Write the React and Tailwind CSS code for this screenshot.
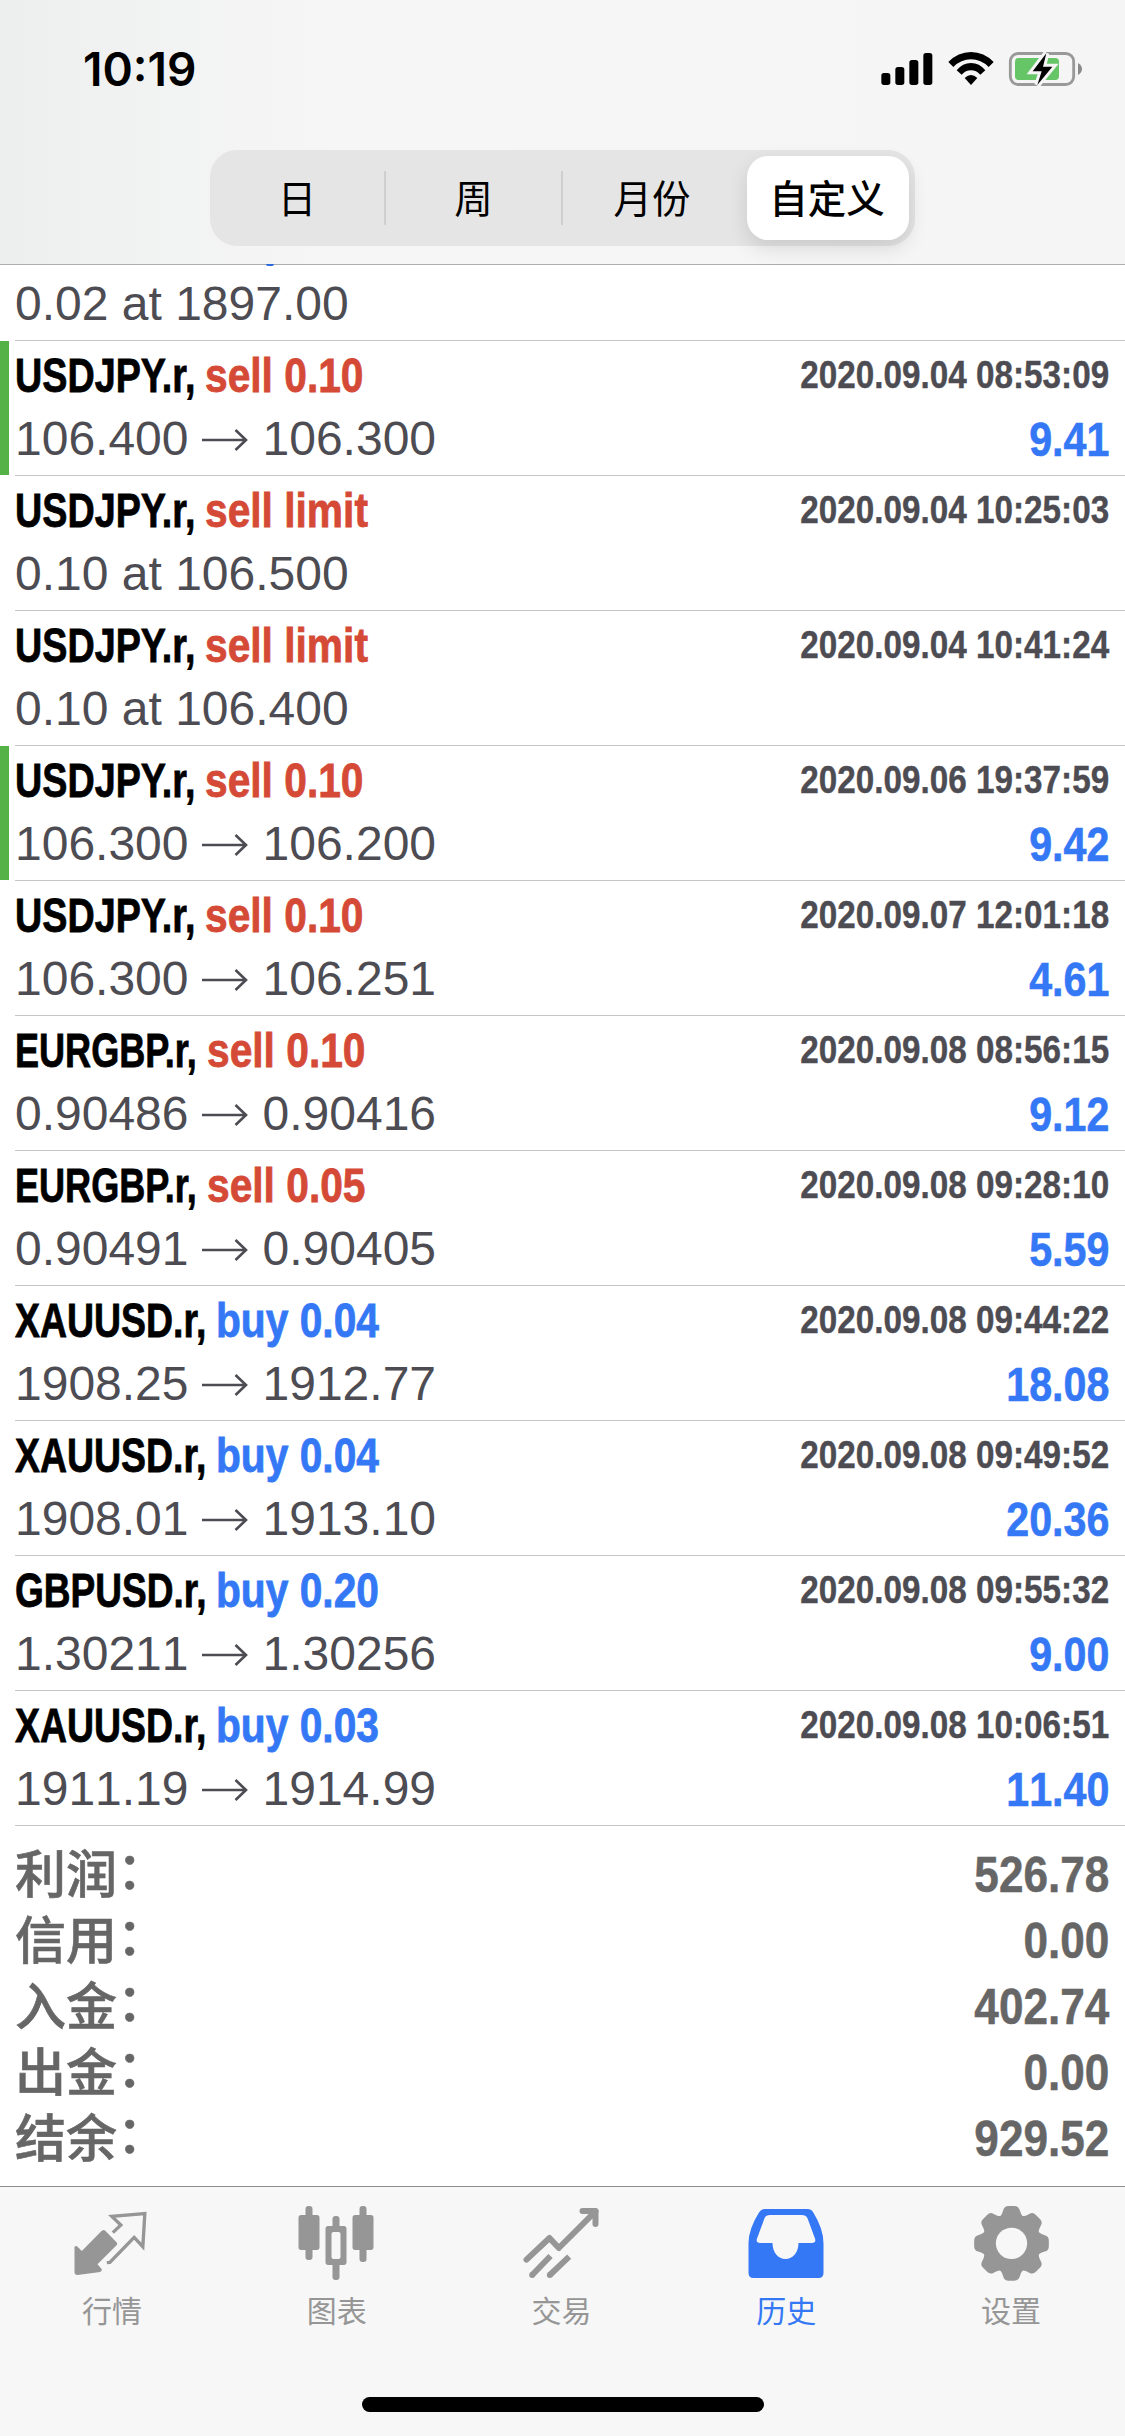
import React from 'react';

const PERIODS = ['日', '周', '月份', '自定义'];

const DEALS = [
    { symbol: 'USDJPY.r,', side: 'sell 0.10', open: '106.400', close: '106.300', time: '2020.09.04 08:53:09', profit: '9.41', marked: true },
    { symbol: 'USDJPY.r,', side: 'sell limit', open: '0.10 at 106.500', time: '2020.09.04 10:25:03' },
    { symbol: 'USDJPY.r,', side: 'sell limit', open: '0.10 at 106.400', time: '2020.09.04 10:41:24' },
    { symbol: 'USDJPY.r,', side: 'sell 0.10', open: '106.300', close: '106.200', time: '2020.09.06 19:37:59', profit: '9.42', marked: true },
    { symbol: 'USDJPY.r,', side: 'sell 0.10', open: '106.300', close: '106.251', time: '2020.09.07 12:01:18', profit: '4.61' },
    { symbol: 'EURGBP.r,', side: 'sell 0.10', open: '0.90486', close: '0.90416', time: '2020.09.08 08:56:15', profit: '9.12' },
    { symbol: 'EURGBP.r,', side: 'sell 0.05', open: '0.90491', close: '0.90405', time: '2020.09.08 09:28:10', profit: '5.59' },
    { symbol: 'XAUUSD.r,', side: 'buy 0.04', open: '1908.25', close: '1912.77', time: '2020.09.08 09:44:22', profit: '18.08' },
    { symbol: 'XAUUSD.r,', side: 'buy 0.04', open: '1908.01', close: '1913.10', time: '2020.09.08 09:49:52', profit: '20.36' },
    { symbol: 'GBPUSD.r,', side: 'buy 0.20', open: '1.30211', close: '1.30256', time: '2020.09.08 09:55:32', profit: '9.00' },
    { symbol: 'XAUUSD.r,', side: 'buy 0.03', open: '1911.19', close: '1914.99', time: '2020.09.08 10:06:51', profit: '11.40' },
];

const TOTALS = [
    ['利润', '526.78'],
    ['信用', '0.00'],
    ['入金', '402.74'],
    ['出金', '0.00'],
    ['结余', '929.52'],
];

// The symbol names are set condensed, each one in its own column width
const SYMBOL_WIDTH = {
    'USDJPY.r,': 'w-[190px]',
    'EURGBP.r,': 'w-[192px]',
    'XAUUSD.r,': 'w-[201px]',
    'GBPUSD.r,': 'w-[201px]',
};
const SYMBOL_SCALE = {
    'USDJPY.r,': 'scale-x-[0.77]',
    'EURGBP.r,': 'scale-x-[0.736]',
    'XAUUSD.r,': 'scale-x-[0.764]',
    'GBPUSD.r,': 'scale-x-[0.756]',
};

const StatusBar = () => (
    <div className="flex h-[150px] items-start justify-between pl-[83px] pr-[42px]">
        <span className="mt-[41px] font-['Inter'] text-[46px] leading-[56px] font-semibold">10:19</span>
        <div className="mt-[50px] flex items-start">
            <svg className="h-[38px] w-[53px]" viewBox="125 60 159 114">
                <rect x="126" y="129" width="27" height="36" rx="8" />
                <rect x="168" y="111" width="27" height="54" rx="8" />
                <rect x="210" y="90" width="27" height="75" rx="8" />
                <rect x="252" y="69" width="27" height="96" rx="8" />
            </svg>
            <svg className="ml-[13px] h-[38px] w-[48px]" viewBox="321 60 144 114">
                <path d="M325 96Q354 66 393 66T461 96L446 111Q423 88 393 88T340 111Z" />
                <path d="M350 121Q368 99 393 99T436 121L421 134Q409 121 393 121T365 134Z" />
                <path d="M374 144Q393 126 412 144L393 165Z" />
            </svg>
            <svg className="ml-[13px] h-[38px] w-[75px]" viewBox="504 60 225 114">
                <rect x="511" y="70.500" width="190" height="93" rx="24" fill="none" stroke="#999" strokeWidth="8.500" />
                <rect x="525" y="84" width="132" height="66" rx="11" fill="#66c667" />
                <path d="M714 99Q726 106 726 117T714 135Z" fill="#8a8a8a" />
                <path d="M619 70L578 124H605L592 165L637 110H609Z" stroke="#f5f5f5" strokeWidth="18" />
                <path d="M619 70L578 124H605L592 165L637 110H609Z" />
            </svg>
        </div>
    </div>
);

const PeriodTabs = () => (
    <div className="mx-auto flex h-[96px] w-[705px] items-center rounded-[27px] bg-[#e5e5e6] pr-[6px] font-['Noto_Sans_CJK_SC',sans-serif] text-[38.5px] leading-[51px]">
        <span className="h-[54px] w-[176px] border-r-2 border-[#cfcfd1] text-center">{PERIODS[0]}</span>
        <span className="h-[54px] w-[177px] border-r-2 border-[#cfcfd1] text-center">{PERIODS[1]}</span>
        <span className="mr-[6px] h-[54px] w-[178px] text-center">{PERIODS[2]}</span>
        <span className="h-[84px] w-[162px] rounded-[21px] bg-white pr-[2px] text-center leading-[81px] font-medium shadow-[0_8px_20px_rgba(0,0,0,0.12)]">{PERIODS[3]}</span>
    </div>
);

const PriceArrow = () => (
    <svg className="mr-[15px] ml-[13px] h-[24px] w-[46px]" viewBox="0 0 46 24" fill="none" stroke="#4d4c53" strokeWidth="2.600">
        <path d="M0 13H44M33.500 3L44 13L33.500 23" />
    </svg>
);

const DealRow = ({ deal }) => (
    <li className="flex h-[135px]">
        <div className={deal.marked ? 'h-[134px] w-[9px] bg-[#54b247]' : 'w-[9px]'} />
        <div className="ml-[6px] flex-1 border-b border-[#c6c6c8] pr-[16px] whitespace-nowrap">
            <div className="flex h-[66px] justify-between pt-[2px]">
                <div className="flex pt-px text-[49px] leading-[63px] font-bold [-webkit-text-stroke-width:0.8px]">
                    <span className={SYMBOL_WIDTH[deal.symbol]}>
                        <span className={`inline-block origin-left ${SYMBOL_SCALE[deal.symbol]}`}>{deal.symbol}</span>
                    </span>
                    <span className={`w-[170px] ${deal.side.startsWith('buy') ? 'text-[#3478f6]' : 'text-[#d54a36]'}`}>
                        <span className="inline-block origin-left scale-x-[0.831]">{deal.side}</span>
                    </span>
                </div>
                <span className="origin-right scale-x-[0.853] text-[39px] leading-[63px] font-bold text-[#4d4c53] [font-kerning:none] [-webkit-text-stroke-width:0.4px]">{deal.time}</span>
            </div>
            <div className="flex h-[64px] items-center justify-between text-[48px] leading-[64px] text-[#4d4c53] [font-kerning:none]">
                <span className="flex items-center">
                    {deal.open}
                    {deal.close && <PriceArrow />}
                    {deal.close}
                </span>
                {deal.profit && (
                    <span className="origin-right scale-x-[0.85] text-[48.5px] font-bold text-[#3478f6] [-webkit-text-stroke-width:0.6px]">{deal.profit}</span>
                )}
            </div>
        </div>
    </li>
);

const Totals = () => (
    <div className="flex flex-col pt-[16px] pr-[16px] pl-[15px] text-[#666]">
        {TOTALS.map(([label, value]) => (
            <div key={label} className="flex h-[66px] items-center justify-between">
                <span className="-translate-y-[4px] font-['Noto_Sans_CJK_SC',sans-serif] text-[51px] leading-[58px] font-medium [-webkit-text-stroke-width:0.6px]">
                    {label}
                    <span className="inline-block -translate-y-[4px]">：</span>
                </span>
                <span className="origin-right scale-x-[0.892] text-[49.5px] leading-[66px] font-bold [-webkit-text-stroke-width:0.5px]">{value}</span>
            </div>
        ))}
    </div>
);

const QuotesIcon = () => (
    <svg className="size-[78px]" viewBox="70.500 75 234 234">
        <path d="M162 150Q165 150 168 153L201 187Q205 191 202 195L144 253L157 268Q158 273 152 276L84 285Q75 285 75 276V200Q80 196 84 200L97 213L156 153Z" fill="#969696" />
        <path d="M190 158L214 135L187 109L286 101L280 200L254 172L181 247L172 248" fill="none" stroke="#969696" strokeWidth="10" />
    </svg>
);

const ChartIcon = () => (
    <svg className="size-[78px]" viewBox="745.500 75 234 234" fill="#969696">
        <rect x="768" y="78" width="21" height="162" rx="9" />
        <rect x="747" y="105" width="63" height="105" rx="8" />
        <rect x="930" y="78" width="21" height="168" rx="9" />
        <rect x="909" y="105" width="63" height="105" rx="8" />
        <rect x="849" y="108" width="21" height="60" rx="9" />
        <rect x="849" y="230" width="21" height="70" rx="9" />
        <rect x="828" y="138" width="63" height="117" rx="8" />
        <rect x="846" y="156" width="27" height="81" rx="6" fill="#f7f7f7" />
    </svg>
);

const TradeIcon = () => (
    <svg className="size-[78px]" viewBox="70.500 45 234 234" fill="none" stroke="#969696" strokeWidth="18" strokeLinejoin="round">
        <path d="M81 209L150 144L178 174L288 64" strokeLinecap="round" />
        <path d="M249 63H288V102" strokeLinecap="round" />
        <path d="M98 255L153 198M151 255L209 200" />
        <circle cx="98" cy="255" r="9" fill="#969696" stroke="none" />
        <circle cx="151" cy="255" r="9" fill="#969696" stroke="none" />
    </svg>
);

const HistoryIcon = () => (
    <svg className="size-[78px]" viewBox="745.500 45 234 234">
        <path
            d="M796 57H924Q935 57 941 67Q972 117 972 160V249Q972 264 957 264H762Q747 264 747 249V160Q747 117 779 67Q785 57 796 57ZM812 75Q799 75 795 85L772 147Q769 159 782 159H819C819 187 836 207 858 207S897 187 897 159H937Q950 159 947 147L924 85Q919 75 907 75Z"
            fill="#3478f6"
            fillRule="evenodd"
        />
    </svg>
);

const SettingsIcon = () => (
    <svg className="size-[78px]" viewBox="99 45 234 234">
        <g fill="#969696">
            <circle cx="214.500" cy="160" r="88" />
            {[0, 45, 90, 135, 180, 225, 270, 315].map((angle) => (
                <path
                    key={angle}
                    transform={`rotate(${angle} 214.500 160)`}
                    d="M180 80Q187 72 190 60Q193 48 206 48H223Q236 48 239 60Q242 72 249 80L214 110Z"
                />
            ))}
        </g>
        <circle cx="214.500" cy="160" r="47" fill="#f7f7f7" />
    </svg>
);

const TABS = [
    { label: '行情', Icon: QuotesIcon },
    { label: '图表', Icon: ChartIcon },
    { label: '交易', Icon: TradeIcon },
    { label: '历史', Icon: HistoryIcon, active: true },
    { label: '设置', Icon: SettingsIcon },
];

const App = () => {
    return (
        <div className="flex h-[2436px] w-[1125px] flex-col overflow-hidden bg-white font-['Liberation_Sans',Arial,sans-serif] text-black">
            <header className="relative h-[265px] shrink-0 border-b border-[#adadad] bg-linear-to-r from-[#edefee] via-[#f6f6f6] via-30% to-[#f5f5f6]">
                <StatusBar />
                <PeriodTabs />
                {/* Tip of the title that is scrolled under the bar */}
                <span className="absolute -bottom-[2px] left-[266px] h-[2px] w-[8px] rounded-b-full bg-[#2b68da]" />
            </header>

            <main className="h-[1921px] shrink-0 overflow-hidden">
                <div className="ml-[15px] h-[76px] border-b border-[#c6c6c8] pt-[7px] text-[48px] leading-[64px] text-[#4d4c53]">
                    0.02 at 1897.00
                </div>
                <ul>
                    {DEALS.map((deal) => (
                        <DealRow key={deal.time} deal={deal} />
                    ))}
                </ul>
                <Totals />
            </main>

            <footer className="flex h-[250px] flex-col border-t border-[#8e8e8e] bg-[#f7f7f7]">
                <nav className="grid grid-cols-5 pt-[18px] pr-px">
                    {TABS.map(({ label, Icon, active }) => (
                        <div key={label} className="flex flex-col items-center">
                            <Icon />
                            <span className={`mt-[4px] mr-px font-['Noto_Sans_CJK_SC',sans-serif] text-[30px] leading-[44px] ${active ? 'text-[#3478f6]' : 'text-[#969696]'}`}>
                                {label}
                            </span>
                        </div>
                    ))}
                </nav>
                <div className="mx-auto mt-[66px] h-[15px] w-[402px] rounded-full bg-black" />
            </footer>
        </div>
    );
};

export default App;
